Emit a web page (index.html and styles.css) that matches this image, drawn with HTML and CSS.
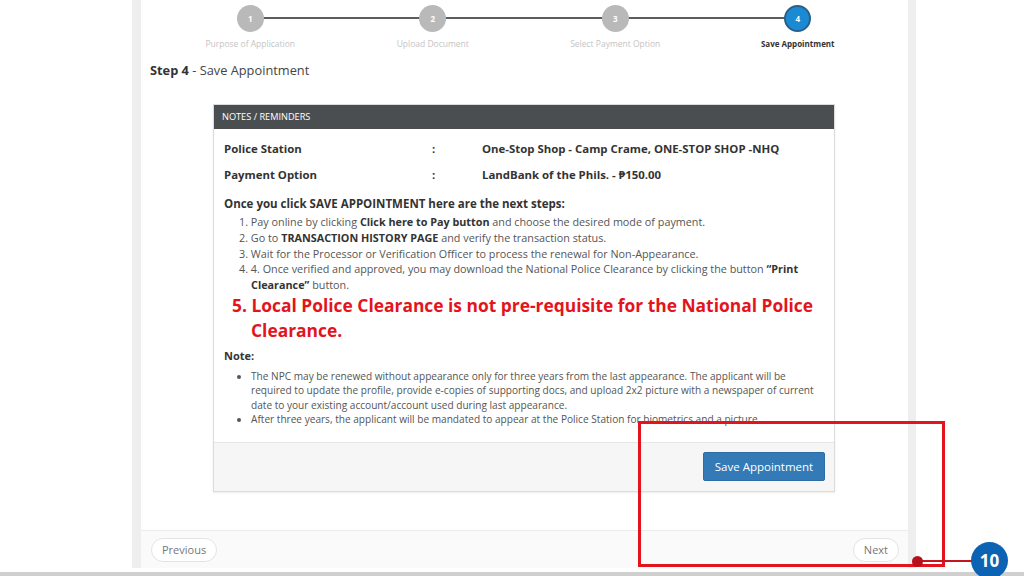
FILE: index.html
```html
<!DOCTYPE html>
<html>
<head>
<meta charset="utf-8">
<link rel="stylesheet" href="styles.css">
</head>
<body>
<div class="page">
  <div class="panel">
    <div class="stepper">
      <div class="step done"><span class="circle">1</span><span class="label">Purpose of Application</span></div>
      <div class="step done"><span class="circle">2</span><span class="label">Upload Document</span></div>
      <div class="step done"><span class="circle">3</span><span class="label">Select Payment Option</span></div>
      <div class="step active"><span class="circle">4</span><span class="label">Save Appointment</span></div>
    </div>
    <div class="step-title"><b>Step 4</b> - Save Appointment</div>
    <div class="card">
      <div class="card-head">NOTES / REMINDERS</div>
      <div class="card-body">
        <div class="info-row"><span>Police Station</span><span>:</span><span>One-Stop Shop - Camp Crame, ONE-STOP SHOP -NHQ</span></div>
        <div class="info-row"><span>Payment Option</span><span>:</span><span>LandBank of the Phils. - ₱150.00</span></div>
        <div class="steps-head">Once you click SAVE APPOINTMENT here are the next steps:</div>
        <div class="steps">
          <div class="item">1. Pay online by clicking <b>Click here to Pay button</b> and choose the desired mode of payment.</div>
          <div class="item">2. Go to <b>TRANSACTION HISTORY PAGE</b> and verify the transaction status.</div>
          <div class="item">3. Wait for the Processor or Verification Officer to process the renewal for Non-Appearance.</div>
          <div class="item">4. 4. Once verified and approved, you may download the National Police Clearance by clicking the button <b>“Print</b> <b>Clearance”</b> button.</div>
        </div>
        <div class="warning">5. Local Police Clearance is not pre-requisite for the National Police Clearance.</div>
        <div class="note-head">Note:</div>
        <ul class="notes">
          <li>The NPC may be renewed without appearance only for three years from the last appearance. The applicant will be required to update the profile, provide e-copies of supporting docs, and upload 2x2 picture with a newspaper of current date to your existing account/account used during last appearance.</li>
          <li>After three years, the applicant will be mandated to appear at the Police Station for biometrics and a picture.</li>
        </ul>
      </div>
      <div class="card-foot"><button class="btn-save">Save Appointment</button></div>
    </div>
    <div class="spacer"></div>
    <div class="panel-foot">
      <button class="btn-pill">Previous</button>
      <button class="btn-pill">Next</button>
    </div>
  </div>
</div>
<div class="bottom-line"></div>
<div class="highlight"></div>
<div class="connector"></div>
<div class="dot"></div>
<div class="badge">10</div>
</body>
</html>
```
FILE: styles.css
```css
* { box-sizing: border-box; }
html, body { margin: 0; padding: 0; }
body {
  width: 1024px;
  height: 576px;
  overflow: hidden;
  background: #fff;
  font-family: "Open Sans", "Noto Sans", sans-serif;
  color: #555;
  position: relative;
}
.page {
  display: flex;
  padding-left: 132px;
  height: 568px;
}
.panel {
  width: 784px;
  border-left: 9px solid #eeeeee;
  border-right: 8px solid #eeeeee;
  display: flex;
  flex-direction: column;
  background: #fff;
}
.stepper {
  display: grid;
  grid-template-columns: repeat(4, 182.5px);
  padding: 5px 0 0 18px;
}
.step {
  position: relative;
  display: flex;
  flex-direction: column;
  align-items: center;
}
.step:not(:last-child)::after {
  content: "";
  position: absolute;
  top: 12px;
  left: 50%;
  width: 100%;
  height: 2px;
  background: #5a5d60;
  z-index: 0;
}
.circle {
  position: relative;
  z-index: 1;
  width: 27px;
  height: 27px;
  border-radius: 50%;
  background: #b9b9b9;
  color: #fff;
  font-size: 8px;
  font-weight: 700;
  display: flex;
  align-items: center;
  justify-content: center;
}
.active .circle {
  background: #1a8ad3;
  border: 2px solid #2c5f88;
}
.label {
  margin-top: 6px;
  font-size: 8.5px;
  line-height: 12px;
  color: #c4c4c4;
}
.active .label { color: #333; font-weight: 700; font-size: 8px; }
.step-title {
  margin-top: 11px;
  padding-left: 9px;
  font-size: 12.8px;
  line-height: 18px;
  color: #444;
}
.step-title b { color: #333; }
.card {
  margin: 25px 0 0 72px;
  width: 622px;
  border: 1px solid #dcdcdc;
  box-shadow: 0 1px 2px rgba(0,0,0,0.08);
}
.card-head {
  background: #4b4e51;
  color: #fff;
  font-size: 9.2px;
  height: 24px;
  line-height: 24px;
  padding-left: 8px;
}
.card-body {
  padding: 7px 10px 15px 10px;
}
.info-row {
  display: grid;
  grid-template-columns: 208px 50px 1fr;
  height: 26px;
  line-height: 26px;
  font-size: 11.4px;
  font-weight: 700;
  color: #333;
}
.steps-head {
  margin-top: 8px;
  font-size: 11.5px;
  line-height: 16px;
  font-weight: 700;
  color: #333;
}
.steps { font-size: 10.8px; line-height: 15.8px; margin-top: 2px; }
.steps .item { padding-left: 27px; text-indent: -12px; }
.steps b { color: #333; }
.warning {
  color: #e3141c;
  font-weight: 700;
  font-size: 17.4px;
  line-height: 25px;
  padding-left: 27px;
  text-indent: -19px;
}
.note-head {
  margin-top: 5px;
  font-size: 11px;
  line-height: 16px;
  font-weight: 700;
  color: #333;
}
.notes {
  margin: 5px 0 0 0;
  padding-left: 27px;
  font-size: 10.1px;
  line-height: 14.5px;
}
.card-foot {
  background: #f6f6f6;
  border-top: 1px solid #e6e6e6;
  height: 49px;
  display: flex;
  justify-content: flex-end;
  align-items: center;
  padding-right: 9px;
}
.btn-save {
  font-family: inherit;
  background: #337ab7;
  color: #fff;
  border: 1px solid #2e6da4;
  border-radius: 2px;
  font-size: 11.5px;
  height: 29px;
  padding: 0 10px;
  width: 122px;
}
.spacer { flex: 1; }
.panel-foot {
  height: 38px;
  border-top: 1px solid #ececec;
  background: #fafafa;
  display: flex;
  justify-content: space-between;
  align-items: center;
  padding: 0 9px 0 10px;
}
.btn-pill {
  font-family: inherit;
  font-size: 11px;
  color: #777;
  background: #fff;
  border: 1px solid #e4e4e4;
  border-radius: 12px;
  height: 24px;
  padding: 0 10px;
}
.bottom-line {
  position: absolute;
  left: 0;
  right: 0;
  top: 572px;
  height: 4px;
  background: #cfcfcf;
}
.highlight {
  position: absolute;
  left: 638px;
  top: 421px;
  width: 307px;
  height: 146px;
  border: 3px solid #e3141c;
}
.connector {
  position: absolute;
  left: 917px;
  top: 560px;
  width: 58px;
  height: 2px;
  background: #c3161e;
}
.dot {
  position: absolute;
  left: 912px;
  top: 556px;
  width: 11px;
  height: 11px;
  border-radius: 50%;
  background: #b8101a;
}
.badge {
  position: absolute;
  left: 971px;
  top: 542px;
  width: 37px;
  height: 37px;
  border-radius: 50%;
  background: #0d63b3;
  color: #fff;
  font-weight: 700;
  font-size: 17px;
  display: flex;
  align-items: center;
  justify-content: center;
  font-family: "Open Sans", sans-serif;
}
```
